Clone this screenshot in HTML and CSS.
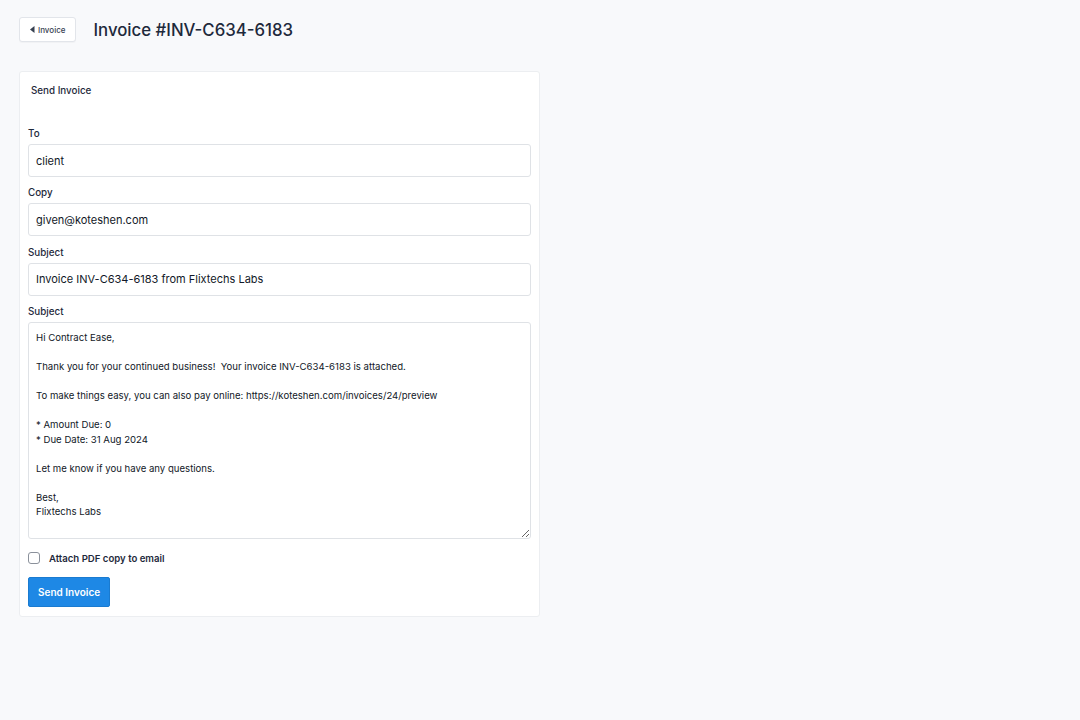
FILE: index.html
```html
<!DOCTYPE html>
<html lang="en">
<head>
  <meta charset="UTF-8" />
  <title>Send Invoice</title>
  <meta name="viewport" content="width=device-width, initial-scale=1.0" />
  <link rel="stylesheet" href="styles.css">
</head>
<body>
  <div class="page-header">
    <a class="back-btn" href="#">
      <svg width="5" height="7" viewBox="0 0 5 7"><path d="M4.5 0 L0 3.5 L4.5 7 Z" fill="#374151"/></svg>
      Invoice
    </a>
    <h1>Invoice #INV-C634-6183</h1>
  </div>

  <div class="card">
    <div class="card-header">Send Invoice</div>
    <div class="card-body">
      <div class="form-group">
        <label>To</label>
        <input type="text" value="client">
      </div>
      <div class="form-group">
        <label>Copy</label>
        <input type="text" value="given@koteshen.com">
      </div>
      <div class="form-group">
        <label>Subject</label>
        <input type="text" value="Invoice INV-C634-6183 from Flixtechs Labs">
      </div>
      <div class="form-group">
        <label>Subject</label>
        <textarea rows="14">Hi Contract Ease,

Thank you for your continued business!  Your invoice INV-C634-6183 is attached.

To make things easy, you can also pay online: https://koteshen.com/invoices/24/preview

* Amount Due: 0
* Due Date: 31 Aug 2024

Let me know if you have any questions.

Best,
Flixtechs Labs</textarea>
      </div>
      <label class="check-row">
        <input type="checkbox">
        <span>Attach PDF copy to email</span>
      </label>
      <button class="send-btn">Send Invoice</button>
    </div>
  </div>
</body>
</html>
```

FILE: styles.css
```css
body {
  font-family: 'Inter', 'Noto Sans', sans-serif;
  margin: 0;
  background: #f8f9fb;
  padding: 17px 19px;
  color: #1e293b;
}

.page-header {
  display: flex;
  align-items: center;
  gap: 17px;
  margin-bottom: 29px;
}

.back-btn {
  display: inline-flex;
  align-items: center;
  gap: 3px;
  height: 25px;
  box-sizing: border-box;
  padding: 0 10px 0 10px;
  background: #fff;
  border: 1px solid #e2e5ea;
  border-radius: 3px;
  font-size: 8px;
  font-weight: 500;
  color: #374151;
  text-decoration: none;
  box-shadow: 0 1px 1px rgba(0,0,0,0.03);
}

h1 {
  margin: 0;
  font-size: 16.8px;
  font-weight: 500;
  color: #1e293b;
}

.card {
  width: 521px;
  box-sizing: border-box;
  background: #fff;
  border: 1px solid #eceef1;
  border-radius: 3px;
}

.card-header {
  padding: 12px 11px 10px 11px;
  font-size: 9.8px;
  font-weight: 500;
  line-height: 14px;
}

.card-body {
  padding: 20px 8px 9px 8px;
}

.form-group {
  margin-bottom: 10.4px;
}

.form-group label {
  display: block;
  font-size: 9.8px;
  font-weight: 500;
  line-height: 12px;
  margin-bottom: 4px;
  color: #1e293b;
}

input[type="text"], textarea {
  display: block;
  width: 100%;
  box-sizing: border-box;
  border: 1px solid #dfe2e6;
  border-radius: 3px;
  font-family: 'Inter', 'Noto Sans', sans-serif;
  color: #111827;
  background: #fff;
  outline: none;
}

input[type="text"] {
  height: 33px;
  padding: 0 7px;
  font-size: 11px;
}

textarea {
  height: 217px;
  padding: 8px 7px;
  font-size: 9.6px;
  line-height: 14.5px;
  margin-bottom: 12px;
}

.check-row {
  display: flex;
  align-items: center;
  gap: 9px;
  font-size: 9.6px;
  font-weight: 600;
  margin-top: 13px;
  margin-bottom: 13px;
}

.check-row input {
  appearance: none;
  width: 12px;
  height: 12px;
  margin: 0;
  border: 1px solid #8b919b;
  border-radius: 3px;
  background: #fff;
}

.send-btn {
  height: 30px;
  padding: 0 9px;
  background: #1e88e5;
  color: #fff;
  border: 1px solid #1a7bd0;
  border-radius: 2px;
  font-family: 'Inter', 'Noto Sans', sans-serif;
  font-size: 10px;
  font-weight: 600;
  cursor: pointer;
}
```
